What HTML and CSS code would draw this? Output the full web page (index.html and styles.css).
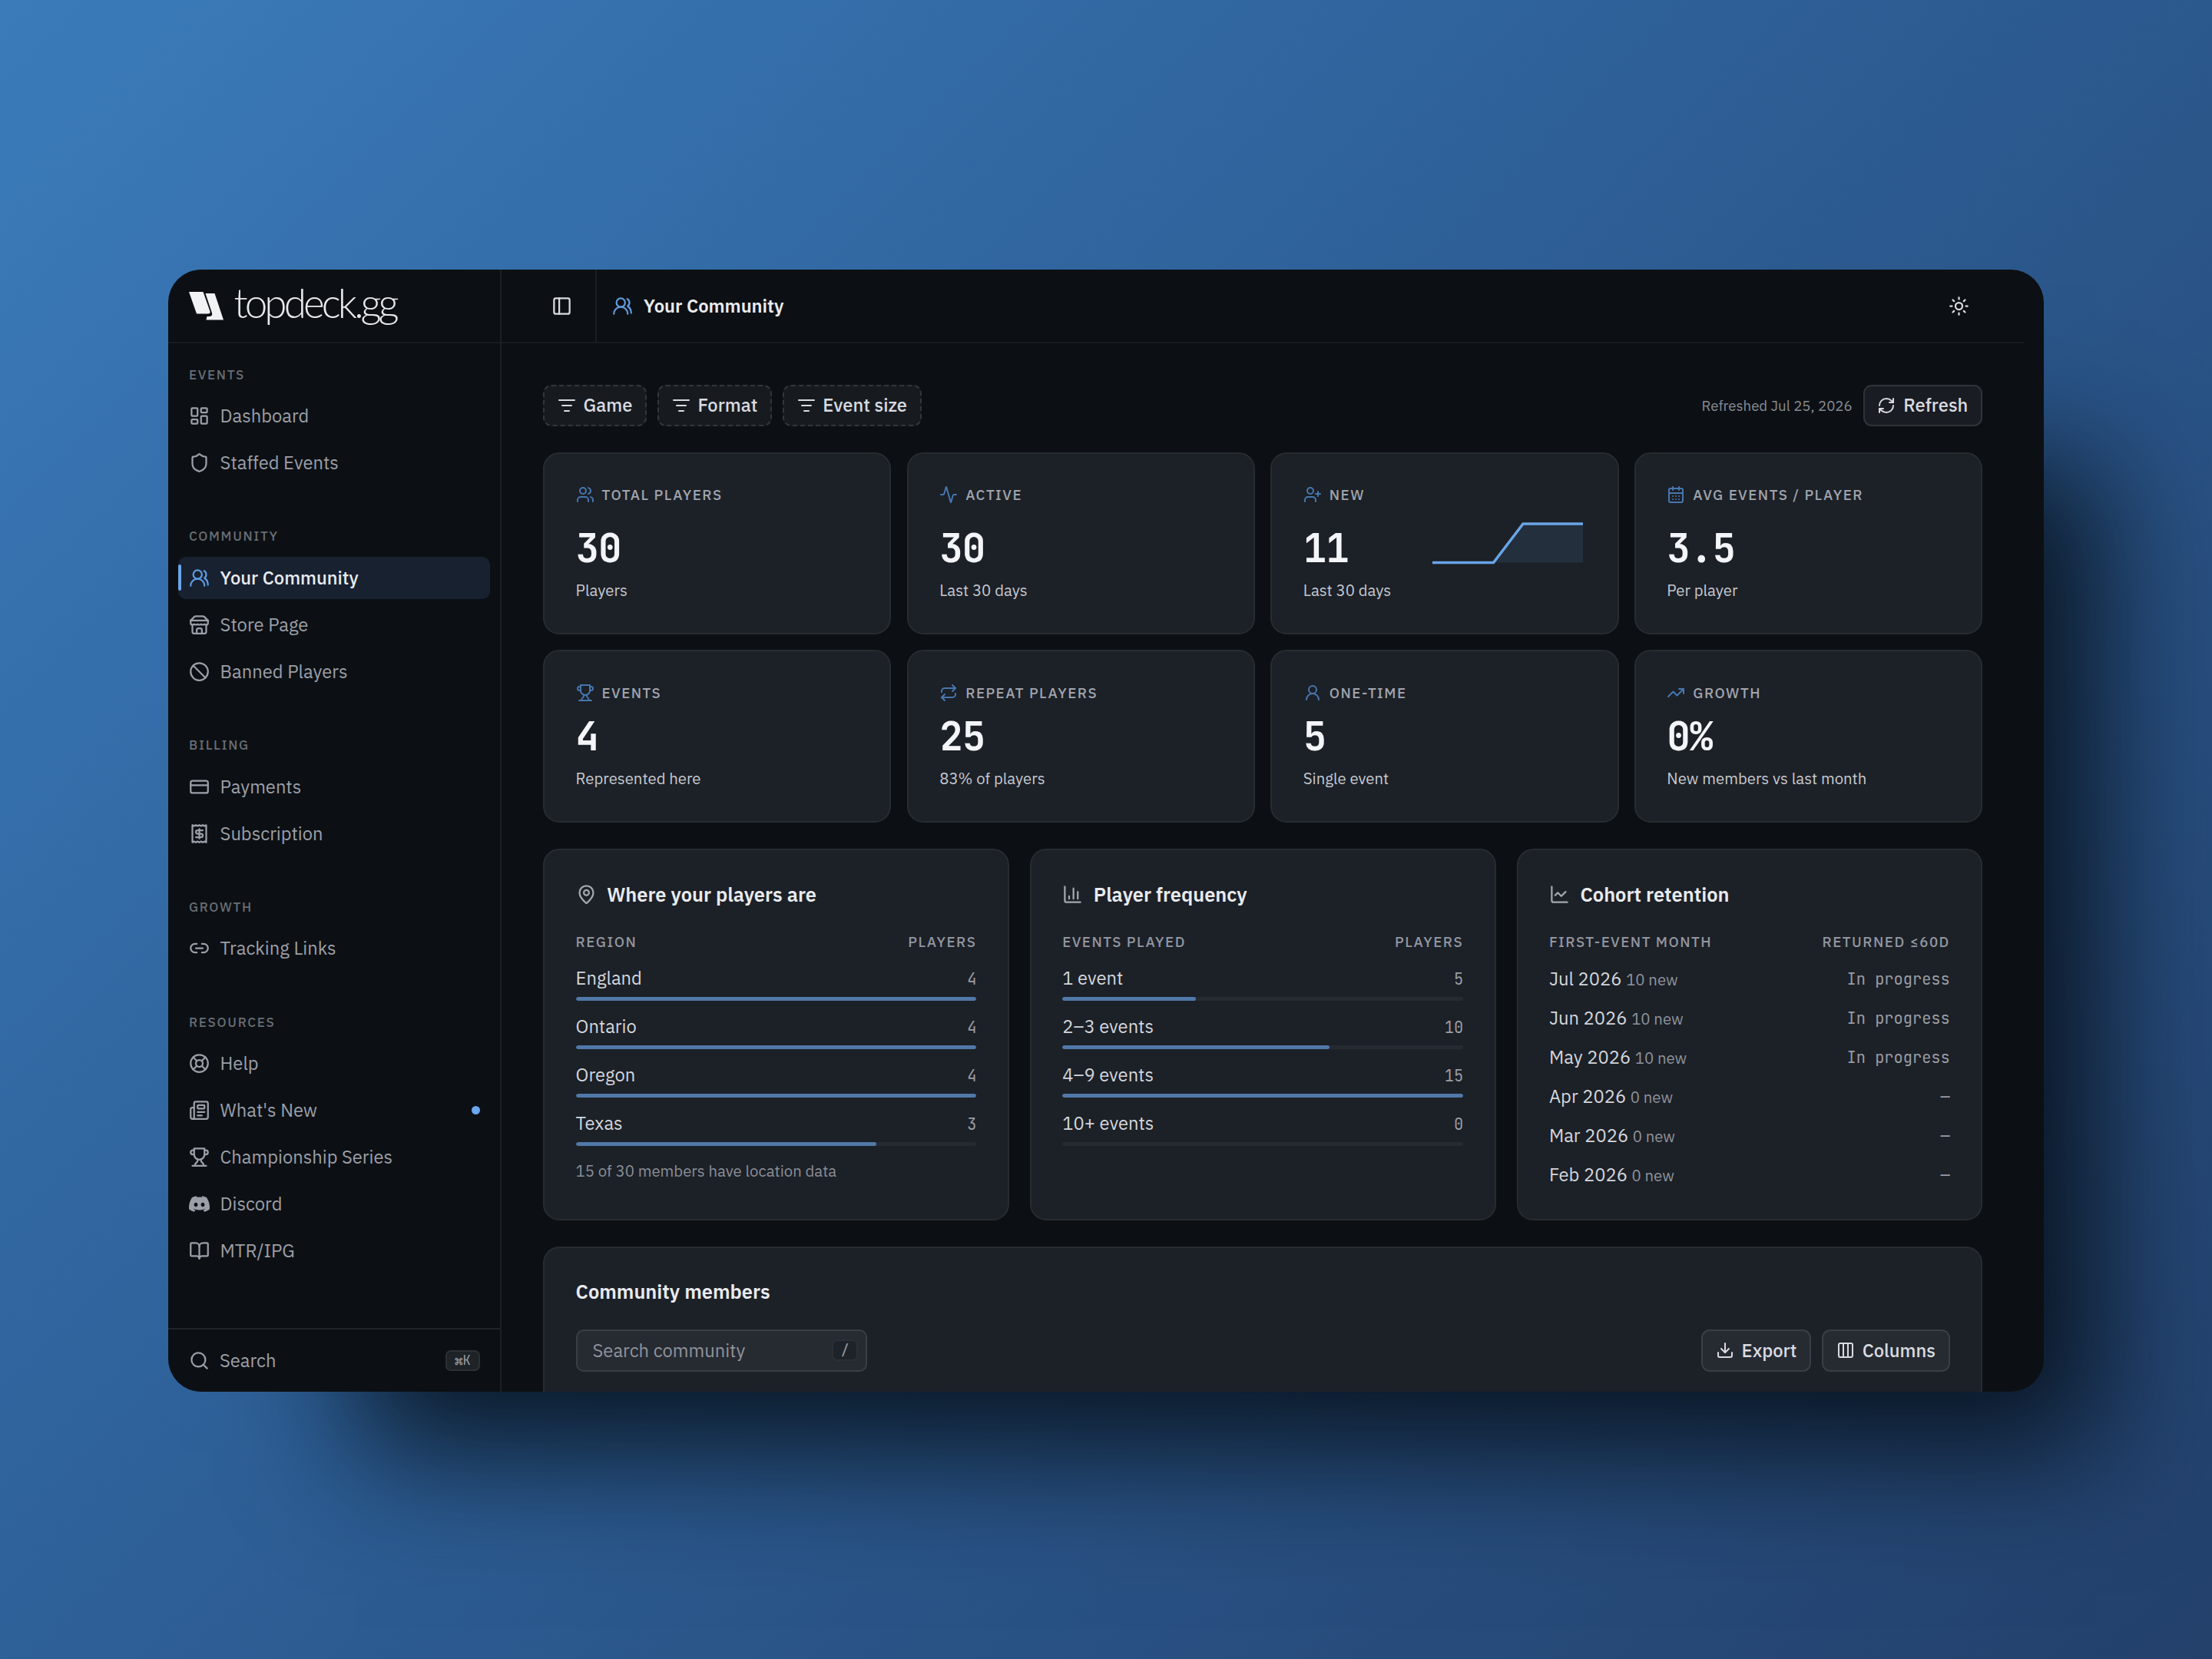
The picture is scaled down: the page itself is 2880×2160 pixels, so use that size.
FILE: index.html
```html
<!DOCTYPE html>
<html lang="en">
<head>
<meta charset="utf-8">
<title>Your Community</title>
<link rel="stylesheet" href="styles.css">
</head>
<body>
<svg class="sprite" aria-hidden="true">
  <symbol id="dashboard" viewBox="0 0 24 24"><rect width="7" height="9" x="3" y="3" rx="1"/><rect width="7" height="5" x="14" y="3" rx="1"/><rect width="7" height="9" x="14" y="12" rx="1"/><rect width="7" height="5" x="3" y="16" rx="1"/></symbol>
  <symbol id="shield" viewBox="0 0 24 24"><path d="M20 13c0 5-3.500 7.500-7.660 8.950a1 1 0 0 1-.67-.01C7.500 20.500 4 18 4 13V6a1 1 0 0 1 1-1c2 0 4.500-1.200 6.240-2.720a1.170 1.170 0 0 1 1.520 0C14.510 3.810 17 5 19 5a1 1 0 0 1 1 1z"/></symbol>
  <symbol id="users-round" viewBox="0 0 24 24"><path d="M18 21a8 8 0 0 0-16 0"/><circle cx="10" cy="8" r="5"/><path d="M22 20c0-3.370-2-6.500-4-8a5 5 0 0 0-.45-8.300"/></symbol>
  <symbol id="store" viewBox="0 0 24 24"><path d="m2 7 4.410-4.410A2 2 0 0 1 7.830 2h8.340a2 2 0 0 1 1.420.59L22 7"/><path d="M4 12v8a2 2 0 0 0 2 2h12a2 2 0 0 0 2-2v-8"/><path d="M15 22v-4a2 2 0 0 0-2-2h-2a2 2 0 0 0-2 2v4"/><path d="M2 7h20"/><path d="M22 7v3a2 2 0 0 1-2 2 2.700 2.700 0 0 1-1.590-.63.700.700 0 0 0-.82 0A2.700 2.700 0 0 1 16 12a2.700 2.700 0 0 1-1.590-.63.700.700 0 0 0-.82 0A2.700 2.700 0 0 1 12 12a2.700 2.700 0 0 1-1.590-.63.700.700 0 0 0-.82 0A2.700 2.700 0 0 1 8 12a2.700 2.700 0 0 1-1.590-.63.700.700 0 0 0-.82 0A2.700 2.700 0 0 1 4 12a2 2 0 0 1-2-2V7"/></symbol>
  <symbol id="ban" viewBox="0 0 24 24"><circle cx="12" cy="12" r="10"/><path d="m4.900 4.900 14.200 14.200"/></symbol>
  <symbol id="card" viewBox="0 0 24 24"><rect width="20" height="14" x="2" y="5" rx="2"/><path d="M2 10h20"/></symbol>
  <symbol id="receipt" viewBox="0 0 24 24"><path d="M4 2v20l2-1 2 1 2-1 2 1 2-1 2 1 2-1 2 1V2l-2 1-2-1-2 1-2-1-2 1-2-1-2 1Z"/><path d="M16 8h-6a2 2 0 1 0 0 4h4a2 2 0 1 1 0 4H8"/><path d="M12 17.500v-11"/></symbol>
  <symbol id="link" viewBox="0 0 24 24"><path d="M9 17H7A5 5 0 0 1 7 7h2"/><path d="M15 7h2a5 5 0 1 1 0 10h-2"/><path d="M8 12h8"/></symbol>
  <symbol id="buoy" viewBox="0 0 24 24"><circle cx="12" cy="12" r="10"/><path d="m4.930 4.930 4.240 4.240"/><path d="m14.830 9.170 4.240-4.240"/><path d="m14.830 14.830 4.240 4.240"/><path d="m9.170 14.830-4.240 4.240"/><circle cx="12" cy="12" r="4"/></symbol>
  <symbol id="news" viewBox="0 0 24 24"><path d="M15 18h-5"/><path d="M18 14h-8"/><path d="M4 22h16a2 2 0 0 0 2-2V4a2 2 0 0 0-2-2H8a2 2 0 0 0-2 2v16a2 2 0 0 1-4 0v-9a2 2 0 0 1 2-2h2"/><rect width="8" height="4" x="10" y="6" rx="1"/></symbol>
  <symbol id="trophy" viewBox="0 0 24 24"><path d="M6 9H4.500a2.500 2.500 0 0 1 0-5H6"/><path d="M18 9h1.500a2.500 2.500 0 0 0 0-5H18"/><path d="M4 22h16"/><path d="M10 14.660v1.626a2 2 0 0 1-.976 1.696A5 5 0 0 0 7 21.978"/><path d="M14 14.660v1.626a2 2 0 0 0 .976 1.696A5 5 0 0 1 17 21.978"/><path d="M18 2H6v7a6 6 0 0 0 12 0Z"/></symbol>
  <symbol id="discord" viewBox="0 0 24 24"><path d="M20.317 4.370a19.791 19.791 0 0 0-4.885-1.515.074.074 0 0 0-.079.037c-.21.375-.444.864-.608 1.250a18.270 18.270 0 0 0-5.487 0 12.640 12.640 0 0 0-.617-1.250.077.077 0 0 0-.079-.037A19.736 19.736 0 0 0 3.677 4.370a.07.07 0 0 0-.032.027C.533 9.046-.32 13.580.099 18.057a.082.082 0 0 0 .031.057 19.900 19.900 0 0 0 5.993 3.030.078.078 0 0 0 .084-.028c.462-.63.874-1.295 1.226-1.994a.076.076 0 0 0-.041-.106 13.107 13.107 0 0 1-1.872-.892.077.077 0 0 1-.008-.128c.126-.094.252-.192.372-.291a.074.074 0 0 1 .077-.01c3.928 1.793 8.180 1.793 12.062 0a.074.074 0 0 1 .078.009c.12.099.246.198.373.292a.077.077 0 0 1-.006.127 12.299 12.299 0 0 1-1.873.892.077.077 0 0 0-.041.107c.36.698.772 1.362 1.225 1.993a.076.076 0 0 0 .084.028 19.839 19.839 0 0 0 6.002-3.030.077.077 0 0 0 .032-.054c.5-5.177-.838-9.674-3.549-13.660a.061.061 0 0 0-.031-.03zM8.020 15.330c-1.183 0-2.157-1.085-2.157-2.419 0-1.333.956-2.419 2.157-2.419 1.210 0 2.176 1.096 2.157 2.420 0 1.333-.956 2.418-2.157 2.418zm7.975 0c-1.183 0-2.157-1.085-2.157-2.419 0-1.333.955-2.419 2.157-2.419 1.210 0 2.176 1.096 2.157 2.420 0 1.333-.946 2.418-2.157 2.418z"/></symbol>
  <symbol id="book" viewBox="0 0 24 24"><path d="M12 7v14"/><path d="M3 18a1 1 0 0 1-1-1V4a1 1 0 0 1 1-1h5a4 4 0 0 1 4 4 4 4 0 0 1 4-4h5a1 1 0 0 1 1 1v13a1 1 0 0 1-1 1h-6a3 3 0 0 0-3 3 3 3 0 0 0-3-3z"/></symbol>
  <symbol id="search" viewBox="0 0 24 24"><circle cx="11" cy="11" r="8"/><path d="m21 21-4.340-4.340"/></symbol>
  <symbol id="panel" viewBox="0 0 24 24"><rect width="18" height="18" x="3" y="3" rx="2"/><path d="M9 3v18"/></symbol>
  <symbol id="sun" viewBox="0 0 24 24"><circle cx="12" cy="12" r="4"/><path d="M12 2v2M12 20v2M4.930 4.930l1.410 1.410M17.660 17.660l1.410 1.410M2 12h2M20 12h2M6.340 17.660l-1.410 1.410M19.070 4.930l-1.410 1.410"/></symbol>
  <symbol id="filter" viewBox="0 0 24 24"><path d="M2 5h20M6 12h12M9 19h6"/></symbol>
  <symbol id="refresh" viewBox="0 0 24 24"><path d="M3 12a9 9 0 0 1 9-9 9.750 9.750 0 0 1 6.740 2.740L21 8"/><path d="M21 3v5h-5"/><path d="M21 12a9 9 0 0 1-9 9 9.750 9.750 0 0 1-6.740-2.740L3 16"/><path d="M8 16H3v5"/></symbol>
  <symbol id="users" viewBox="0 0 24 24"><path d="M16 21v-2a4 4 0 0 0-4-4H6a4 4 0 0 0-4 4v2"/><circle cx="9" cy="7" r="4"/><path d="M22 21v-2a4 4 0 0 0-3-3.870"/><path d="M16 3.130a4 4 0 0 1 0 7.750"/></symbol>
  <symbol id="activity" viewBox="0 0 24 24"><path d="M22 12h-2.480a2 2 0 0 0-1.930 1.460l-2.350 8.360a.25.25 0 0 1-.48 0L9.240 2.180a.25.25 0 0 0-.48 0l-2.350 8.360A2 2 0 0 1 4.490 12H2"/></symbol>
  <symbol id="user-plus" viewBox="0 0 24 24"><path d="M16 21v-2a4 4 0 0 0-4-4H6a4 4 0 0 0-4 4v2"/><circle cx="9" cy="7" r="4"/><path d="M19 8v6M22 11h-6"/></symbol>
  <symbol id="calendar" viewBox="0 0 24 24"><path d="M8 2v4M16 2v4"/><rect width="18" height="18" x="3" y="4" rx="2"/><path d="M3 10h18M8 14h.01M12 14h.01M16 14h.01M8 18h.01M12 18h.01M16 18h.01"/></symbol>
  <symbol id="repeat" viewBox="0 0 24 24"><path d="m17 2 4 4-4 4"/><path d="M3 11v-1a4 4 0 0 1 4-4h14"/><path d="m7 22-4-4 4-4"/><path d="M21 13v1a4 4 0 0 1-4 4H3"/></symbol>
  <symbol id="user-round" viewBox="0 0 24 24"><circle cx="12" cy="8" r="5"/><path d="M20 21a8 8 0 0 0-16 0"/></symbol>
  <symbol id="trend" viewBox="0 0 24 24"><path d="M16 7h6v6"/><path d="m22 7-8.500 8.500-5-5L2 17"/></symbol>
  <symbol id="pin" viewBox="0 0 24 24"><path d="M20 10c0 4.993-5.539 10.193-7.399 11.799a1 1 0 0 1-1.202 0C9.539 20.193 4 14.993 4 10a8 8 0 0 1 16 0"/><circle cx="12" cy="10" r="3"/></symbol>
  <symbol id="bars" viewBox="0 0 24 24"><path d="M3 3v16a2 2 0 0 0 2 2h16M18 17V9M13 17V5M8 17v-3"/></symbol>
  <symbol id="line" viewBox="0 0 24 24"><path d="M3 3v16a2 2 0 0 0 2 2h16"/><path d="m19 9-5 5-4-4-3 3"/></symbol>
  <symbol id="download" viewBox="0 0 24 24"><path d="M12 15V3"/><path d="M21 15v4a2 2 0 0 1-2 2H5a2 2 0 0 1-2-2v-4"/><path d="m7 10 5 5 5-5"/></symbol>
  <symbol id="columns" viewBox="0 0 24 24"><rect width="18" height="18" x="3" y="3" rx="2"/><path d="M9 3v18M15 3v18"/></symbol>
</svg>

<div class="window">
  <aside class="sidebar">
    <div class="brand">
      <svg class="brand-mark" viewBox="0 0 45 37"><path d="M0 0H18.500L27.500 25.500Q28 28.500 25 28.500H10Z"/><path d="M21.500 2H33.500L45 36.500H22.500L23.500 32H27Q31 31.500 30 27.500Z"/></svg>
      <span class="brand-name">topdeck.gg</span>
    </div>
    <nav class="nav">
      <section class="group">
        <h2 class="group-label">EVENTS</h2>
        <a class="item"><svg class="icon"><use href="#dashboard"/></svg><span>Dashboard</span></a>
        <a class="item"><svg class="icon"><use href="#shield"/></svg><span>Staffed Events</span></a>
      </section>
      <section class="group">
        <h2 class="group-label">COMMUNITY</h2>
        <a class="item active"><svg class="icon"><use href="#users-round"/></svg><span>Your Community</span></a>
        <a class="item"><svg class="icon"><use href="#store"/></svg><span>Store Page</span></a>
        <a class="item"><svg class="icon"><use href="#ban"/></svg><span>Banned Players</span></a>
      </section>
      <section class="group">
        <h2 class="group-label">BILLING</h2>
        <a class="item"><svg class="icon"><use href="#card"/></svg><span>Payments</span></a>
        <a class="item"><svg class="icon"><use href="#receipt"/></svg><span>Subscription</span></a>
      </section>
      <section class="group">
        <h2 class="group-label">GROWTH</h2>
        <a class="item"><svg class="icon"><use href="#link"/></svg><span>Tracking Links</span></a>
      </section>
      <section class="group">
        <h2 class="group-label">RESOURCES</h2>
        <a class="item"><svg class="icon"><use href="#buoy"/></svg><span>Help</span></a>
        <a class="item"><svg class="icon"><use href="#news"/></svg><span>What's New</span><i class="dot"></i></a>
        <a class="item"><svg class="icon"><use href="#trophy"/></svg><span>Championship Series</span></a>
        <a class="item"><svg class="icon solid"><use href="#discord"/></svg><span>Discord</span></a>
        <a class="item"><svg class="icon"><use href="#book"/></svg><span>MTR/IPG</span></a>
      </section>
    </nav>
    <div class="side-search">
      <svg class="icon"><use href="#search"/></svg><span>Search</span><kbd class="key">⌘K</kbd>
    </div>
  </aside>

  <div class="main">
    <header class="topbar">
      <div class="toggle"><svg class="icon"><use href="#panel"/></svg></div>
      <div class="page-title"><svg class="icon accent"><use href="#users-round"/></svg><h1>Your Community</h1></div>
      <svg class="icon theme"><use href="#sun"/></svg>
    </header>

    <main class="content">
      <div class="toolbar">
        <button class="btn dashed"><svg class="icon small"><use href="#filter"/></svg>Game</button>
        <button class="btn dashed"><svg class="icon small"><use href="#filter"/></svg>Format</button>
        <button class="btn dashed"><svg class="icon small"><use href="#filter"/></svg>Event size</button>
        <span class="refreshed">Refreshed Jul 25, 2026</span>
        <button class="btn refresh"><svg class="icon small"><use href="#refresh"/></svg>Refresh</button>
      </div>

      <div class="stats">
        <article class="card tall"><h3 class="stat-label"><svg class="icon small"><use href="#users"/></svg>TOTAL PLAYERS</h3><div class="stat-row"><b class="value">30</b></div><p class="stat-note">Players</p></article>
        <article class="card tall"><h3 class="stat-label"><svg class="icon small"><use href="#activity"/></svg>ACTIVE</h3><div class="stat-row"><b class="value">30</b></div><p class="stat-note">Last 30 days</p></article>
        <article class="card tall"><h3 class="stat-label"><svg class="icon small"><use href="#user-plus"/></svg>NEW</h3><div class="stat-row"><b class="value">11</b>
          <svg class="spark" viewBox="0 0 200 72"><path class="area" d="M1 62.500H79.500L118 12H196V62.500Z"/><path class="stroke" d="M0 62.500H79.500L118 12H196"/></svg></div><p class="stat-note">Last 30 days</p></article>
        <article class="card tall"><h3 class="stat-label"><svg class="icon small"><use href="#calendar"/></svg>AVG EVENTS / PLAYER</h3><div class="stat-row"><b class="value">3.5</b></div><p class="stat-note">Per player</p></article>
        <article class="card"><h3 class="stat-label"><svg class="icon small"><use href="#trophy"/></svg>EVENTS</h3><div class="stat-row"><b class="value">4</b></div><p class="stat-note">Represented here</p></article>
        <article class="card"><h3 class="stat-label"><svg class="icon small"><use href="#repeat"/></svg>REPEAT PLAYERS</h3><div class="stat-row"><b class="value">25</b></div><p class="stat-note">83% of players</p></article>
        <article class="card"><h3 class="stat-label"><svg class="icon small"><use href="#user-round"/></svg>ONE-TIME</h3><div class="stat-row"><b class="value">5</b></div><p class="stat-note">Single event</p></article>
        <article class="card"><h3 class="stat-label"><svg class="icon small"><use href="#trend"/></svg>GROWTH</h3><div class="stat-row"><b class="value">0%</b></div><p class="stat-note">New members vs last month</p></article>
      </div>

      <div class="panels">
        <section class="card panel">
          <h2 class="panel-title"><svg class="icon"><use href="#pin"/></svg>Where your players are</h2>
          <div class="cols"><span>REGION</span><span>PLAYERS</span></div>
          <div class="bar-row"><span>England</span><span class="num">4</span></div><div class="track"><div class="fill" style="width:100%"></div></div>
          <div class="bar-row"><span>Ontario</span><span class="num">4</span></div><div class="track"><div class="fill" style="width:100%"></div></div>
          <div class="bar-row"><span>Oregon</span><span class="num">4</span></div><div class="track"><div class="fill" style="width:100%"></div></div>
          <div class="bar-row"><span>Texas</span><span class="num">3</span></div><div class="track"><div class="fill" style="width:75%"></div></div>
          <p class="footnote">15 of 30 members have location data</p>
        </section>
        <section class="card panel">
          <h2 class="panel-title"><svg class="icon"><use href="#bars"/></svg>Player frequency</h2>
          <div class="cols"><span>EVENTS PLAYED</span><span>PLAYERS</span></div>
          <div class="bar-row"><span>1 event</span><span class="num">5</span></div><div class="track"><div class="fill" style="width:33.300%"></div></div>
          <div class="bar-row"><span>2–3 events</span><span class="num">10</span></div><div class="track"><div class="fill" style="width:66.700%"></div></div>
          <div class="bar-row"><span>4–9 events</span><span class="num">15</span></div><div class="track"><div class="fill" style="width:100%"></div></div>
          <div class="bar-row"><span>10+ events</span><span class="num">0</span></div><div class="track"><div class="fill" style="width:0%"></div></div>
        </section>
        <section class="card panel">
          <h2 class="panel-title"><svg class="icon"><use href="#line"/></svg>Cohort retention</h2>
          <div class="cols"><span>FIRST-EVENT MONTH</span><span>RETURNED ≤60D</span></div>
          <div class="cohort"><span>Jul 2026 <small>10 new</small></span><span class="num">In progress</span></div>
          <div class="cohort"><span>Jun 2026 <small>10 new</small></span><span class="num">In progress</span></div>
          <div class="cohort"><span>May 2026 <small>10 new</small></span><span class="num">In progress</span></div>
          <div class="cohort"><span>Apr 2026 <small>0 new</small></span><span class="num">—</span></div>
          <div class="cohort"><span>Mar 2026 <small>0 new</small></span><span class="num">—</span></div>
          <div class="cohort"><span>Feb 2026 <small>0 new</small></span><span class="num">—</span></div>
        </section>
      </div>

      <section class="card members">
        <h2 class="members-title">Community members</h2>
        <div class="members-bar">
          <div class="field"><span>Search community</span><kbd class="slash">/</kbd></div>
          <button class="btn raised"><svg class="icon small"><use href="#download"/></svg>Export</button>
          <button class="btn raised"><svg class="icon small"><use href="#columns"/></svg>Columns</button>
        </div>
      </section>
    </main>
  </div>
</div>
</body>
</html>
```
FILE: styles.css
```css
* { box-sizing: border-box; margin: 0; }

body {
  width: 2880px;
  height: 2160px;
  overflow: hidden;
  padding: 351px 219px;
  background: linear-gradient(135deg, #3b7bba 0%, #3167a1 32%, #2c5b91 52%, #23406b 100%);
  font-family: "IBM Plex Sans", "Open Sans", "Noto Sans", sans-serif;
  font-size: 23.740px;
  color: #d3d6dc;
}

.sprite { display: none; }

.window {
  display: flex;
  width: 2442px;
  height: 1461px;
  border-radius: 43px;
  overflow: hidden;
  background: #0c1014;
  box-shadow: 158px 165px 155px -88px rgba(7, 16, 26, 0.920);
}

.icon {
  flex: none;
  width: 27px;
  height: 27px;
  fill: none;
  stroke: currentColor;
  stroke-width: 2;
  stroke-linecap: round;
  stroke-linejoin: round;
}
.icon.small { width: 24px; height: 24px; }
.icon.solid { fill: currentColor; stroke: none; }
.icon.accent { color: #5f9bdf; }

/* Sidebar */
.sidebar {
  display: flex;
  flex-direction: column;
  width: 434px;
  border-right: 2px solid #1c2024;
  color: #9c9fa8;
}
.brand {
  display: flex;
  align-items: center;
  height: 95.500px;
  padding: 1px 0 0 26.500px;
  border-bottom: 2px solid #181c20;
}
.brand-mark { width: 45px; height: 37px; fill: #f1f2f4; }
.brand-name {
  margin: -9px 0 0 14px;
  font: 300 53px/60px Lato, sans-serif;
  letter-spacing: -3.900px;
  color: #e9eaec;
}
.nav { flex: 1; padding: 21.300px 13px 0; }
.group { display: flex; flex-direction: column; gap: 6.800px; margin-bottom: 48.500px; }
.group-label {
  padding-left: 14px;
  font-size: 17px;
  font-weight: 500;
  line-height: 40px;
  letter-spacing: 1.700px;
  color: #6a6e75;
}
.item {
  display: flex;
  align-items: center;
  gap: 13.600px;
  height: 54.300px;
  padding: 0 13px 0 14px;
  border-radius: 10px;
}
.item.active {
  background: #182130;
  color: #e9ecf1;
  font-weight: 500;
  padding-left: 0;
}
.item.active::before { content: ""; width: 4px; height: 34px; margin-right: -3.600px; border-radius: 2px; background: #6aa5e8; }
.item.active .icon { color: #5f9bdf; }
.dot { width: 11px; height: 11px; margin-left: auto; border-radius: 50%; background: #6ba6ee; }
.side-search {
  display: flex;
  align-items: center;
  gap: 13px;
  height: 83px;
  padding: 0 26px 0 27px;
  border-top: 2px solid #202428;
}
.key {
  margin-left: auto;
  width: 45px;
  border: 2px solid #2c3136;
  border-radius: 7px;
  background: #1e2328;
  font: 17px/23px "JetBrains Mono", "Liberation Mono", monospace;
  text-align: center;
  color: #9a9da5;
}

/* Header */
.main { display: flex; flex-direction: column; flex: 1; min-width: 0; }
.topbar {
  display: flex;
  align-items: center;
  flex: none;
  height: 95.500px;
  margin-right: 26px;
  border-bottom: 2px solid #181c20;
  color: #d9dbe0;
}
.toggle {
  display: flex;
  align-items: center;
  justify-content: flex-end;
  width: 124px;
  height: 100%;
  padding: 2px 30px 0 0;
  border-right: 2px solid #1a1e22;
}
.page-title { display: flex; align-items: center; gap: 14px; padding: 2px 0 0 20px; }
.page-title h1 { font-size: 23.740px; font-weight: 600; color: #e9ebef; }
.theme { margin: 2px 71px 0 auto; }

/* Content */
.content { width: 1874px; margin: 54.500px 0 0 54.200px; }
.toolbar { display: flex; align-items: center; gap: 13.800px; margin-bottom: 33.500px; }
.btn {
  display: flex;
  align-items: center;
  gap: 10px;
  height: 54.300px;
  padding: 0 16.800px;
  border: 2px solid #30343a;
  border-radius: 11px;
  background: #191c22;
  font: 500 23.740px/1 "IBM Plex Sans", "Open Sans", sans-serif;
  color: #d9dbe0;
}
.btn.dashed { gap: 9.600px; border: 2px dashed #33373c; background: #171b20; }
.btn.raised { background: #262a31; border-color: #3a3e45; }
.refreshed { margin-left: auto; font-size: 18.650px; color: #878b93; }

.card {
  padding: 38.900px 40.400px 42px;
  border: 2px solid #272c31;
  border-radius: 21px;
  background: #1c2027;
}
.stats {
  display: grid;
  grid-template-columns: repeat(4, 1fr);
  gap: 20.400px;
}
.stat-label {
  display: flex;
  align-items: center;
  gap: 10px;
  height: 29px;
  font-size: 18.650px;
  font-weight: 500;
  letter-spacing: 1.500px;
  color: #a1a5ad;
}
.stat-label .icon { color: #4677ae; }
.stat-row { display: flex; align-items: flex-end; justify-content: space-between; height: 61px; margin: 12.400px 0 11px; }
.tall .stat-row { height: 72.700px; }
.value {
  font: 600 50.900px/61px "JetBrains Mono", "Liberation Mono", monospace;
  letter-spacing: -1px;
  color: #f3f5f8;
}
.spark { width: 200px; height: 72px; margin-bottom: 1.500px; }
.spark .area { fill: #232f3d; }
.spark .stroke { fill: none; stroke: #6aa5e8; stroke-width: 3.500; }
.stat-note { font-size: 20.350px; line-height: 27px; color: #c6c9cf; }

.panels { display: grid; grid-template-columns: repeat(3, 1fr); gap: 27px; margin-top: 33.500px; }
.panel { height: 484px; padding-top: 39.900px; }
.panel-title { display: flex; align-items: center; gap: 13.600px; height: 38px; margin-top: -1px; font-size: 25.440px; font-weight: 600; color: #e9ebef; }
.panel-title .icon { color: #a3a7ae; }
.cols {
  display: flex;
  justify-content: space-between;
  margin-top: 28.500px;
  font-size: 18.650px;
  font-weight: 500;
  line-height: 29px;
  letter-spacing: 1.500px;
  color: #9397a0;
}
.bar-row { display: flex; align-items: center; justify-content: space-between; height: 40px; margin-top: 13.400px; }
.bar-row + .track { margin-top: 4px; }
.cols + .bar-row { margin-top: 12.500px; }
.track { height: 5.500px; border-radius: 3px; background: #262b31; overflow: hidden; }
.fill { height: 100%; border-radius: 3px; background: #5078a8; }
.num { font: 20.350px/27px "JetBrains Mono", "Liberation Mono", monospace; color: #9a9da5; }
.bar-row .num { padding-top: 1px; }
.footnote { margin-top: 19px; font-size: 20.350px; line-height: 27px; color: #8a8e96; }
.cohort { display: flex; align-items: center; justify-content: space-between; height: 50.900px; }
.cols + .cohort { margin-top: 8px; }
.cohort small { font-size: 20.350px; color: #8f939b; }

.members { height: 300px; margin-top: 34px; padding-top: 40.400px; }
.members-title { margin-top: -1px; font-size: 25.440px; font-weight: 600; line-height: 36px; color: #e9ebef; }
.members-bar { display: flex; gap: 13.600px; margin-top: 31px; }
.field {
  display: flex;
  align-items: center;
  justify-content: space-between;
  width: 379.500px;
  height: 54.300px;
  margin-right: auto;
  padding: 0 10px 0 20px;
  border: 2px solid #3a3e45;
  border-radius: 10px;
  background: #262a31;
  color: #8f939b;
}
.slash {
  width: 34px;
  border: 2px solid #2a3036;
  border-radius: 7px;
  background: #1e2329;
  font: 18px/24px "JetBrains Mono", "Liberation Mono", monospace;
  text-align: center;
  color: #9a9da5;
}
```
